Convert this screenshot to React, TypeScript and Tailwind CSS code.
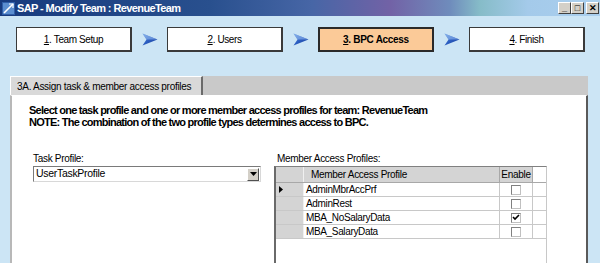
import { Fragment } from 'react'

const STEPS = [
  { num: '1', label: 'Team Setup', active: false },
  { num: '2', label: 'Users', active: false },
  { num: '3', label: 'BPC Access', active: true },
  { num: '4', label: 'Finish', active: false },
]

const PROFILES = [
  { name: 'AdminMbrAccPrf', enabled: false, current: true },
  { name: 'AdminRest', enabled: false, current: false },
  { name: 'MBA_NoSalaryData', enabled: true, current: false },
  { name: 'MBA_SalaryData', enabled: false, current: false },
]

function StepArrow() {
  return (
    <svg width="16" height="13" viewBox="0 0 16 13">
      <defs>
        <linearGradient id="arw" x1="0" y1="0" x2="1" y2="1">
          <stop offset="0" stopColor="#6fa0e0" />
          <stop offset="0.5" stopColor="#2a5cc0" />
          <stop offset="1" stopColor="#1a3f98" />
        </linearGradient>
      </defs>
      <path d="M0.5 0.5 L15.5 6.5 L0.5 12.5 L4.5 6.5 Z" fill="url(#arw)" />
      <path d="M0.5 0.5 L15.5 6.5 L4.5 6.5 Z" fill="#8fb8ee" opacity="0.6" />
    </svg>
  )
}

function WinButton({ glyph }: { glyph: string }) {
  return (
    <div className="flex h-[12px] w-[13px] items-center justify-center border border-t-white border-l-white border-r-[#404040] border-b-[#404040] bg-[#d4d0c8] text-[9px] leading-none font-bold text-black">
      {glyph}
    </div>
  )
}

function Checkbox({ checked }: { checked: boolean }) {
  return (
    <div className="flex h-[10px] w-[10px] items-center justify-center border border-t-[#808080] border-l-[#808080] border-r-[#c0c0c0] border-b-[#c0c0c0] bg-white">
      {checked && (
        <svg width="8" height="7" viewBox="0 0 8 7">
          <path d="M1 3 L3 5 L7 1" stroke="#000" strokeWidth="1.6" fill="none" />
        </svg>
      )}
    </div>
  )
}

export default function App() {
  return (
    <div className="flex h-[263px] w-[600px] flex-col overflow-hidden bg-[#cce5f5] font-['Liberation_Sans',Arial,sans-serif] text-black">
      {/* title bar */}
      <div className="flex h-[16px] items-center justify-between bg-[linear-gradient(90deg,#173a7e_0%,#29508e_35%,#4766a6_52%,#7262a6_65%,#6f8cbc_75%,#86bcc8_80%,#a4caea_88%,#aacfee_100%)] pr-[1px] pl-[2px]">
        <div className="flex items-center gap-[2px]">
          <svg width="13" height="13" viewBox="0 0 13 13">
            <rect x="0" y="0" width="13" height="13" fill="#2f5ea8" />
            <rect x="1" y="1" width="11" height="11" fill="#5b8ed0" />
            <path d="M2 11 L11 2" stroke="#fff" strokeWidth="1.6" />
            <path d="M7 2 L11 2 L11 6" stroke="#fff" strokeWidth="1.2" fill="none" />
          </svg>
          <span className="text-[11px] font-bold tracking-[-0.6px] text-white">SAP - Modify Team : RevenueTeam</span>
        </div>
        <div className="flex gap-0">
          <WinButton glyph="_" />
          <WinButton glyph="□" />
          <div className="ml-[2px]">
            <WinButton glyph="✕" />
          </div>
        </div>
      </div>

      {/* wizard steps */}
      <div className="mt-[11px] flex items-center pl-[16px]">
        {STEPS.map((s, i) => (
          <Fragment key={s.num}>
            {i > 0 && (
              <div className="flex w-[35px] justify-center">
                <StepArrow />
              </div>
            )}
            <div
              className={
                s.active
                  ? 'flex h-[25px] w-[116px] items-center justify-center border-2 border-[#2a2a2a] bg-[#fbca98] text-[10px] font-bold tracking-[-0.3px]'
                  : 'flex h-[25px] w-[116px] items-center justify-center border border-r-2 border-b-2 border-[#3a3a3a] bg-white text-[10px] tracking-[-0.4px]'
              }
            >
              <span className="underline">{s.num}</span>
              <span>.&nbsp;{s.label}</span>
            </div>
          </Fragment>
        ))}
      </div>

      <div className="mt-[12px] h-[2px] bg-[#3a3a3a]" />

      {/* tab control */}
      <div className="flex flex-1 flex-col pt-[12px] pr-[12px] pl-[10px]">
        <div className="flex h-[19px] bg-[#c9c9c9]">
          <div className="flex w-[193px] items-center border-t border-l border-r-2 border-t-white border-l-white border-r-[#6a6a6a] bg-[#d9d9d9] pl-[6px] text-[10px] tracking-[-0.3px]">
            3A. Assign task &amp; member access profiles
          </div>
        </div>
        <div className="flex-1 border-t border-l-2 border-r-2 border-t-white border-l-[#b8b8b8] border-r-[#5a5a5a] bg-white pt-[8px] pl-[17px]">
          <div className="text-[11px] leading-[12px] font-bold tracking-[-0.75px]">
            <div>Select one task profile and one or more member access profiles for team: RevenueTeam</div>
            <div>NOTE: The combination of the two profile types determines access to BPC.</div>
          </div>

          <div className="mt-[24px] flex">
            {/* task profile */}
            <div className="ml-[4px] flex w-[228px] flex-col">
              <div className="h-[13px] text-[10px] leading-[13px] tracking-[-0.3px]">Task Profile:</div>
              <div className="mt-[1px] flex h-[16px] items-center justify-between border border-t-[#7a7a7a] border-l-[#7a7a7a] border-r-[#d8d8d8] border-b-[#d8d8d8] bg-white">
                <span className="pl-[2px] text-[10.5px] tracking-[-0.3px]">UserTaskProfile</span>
                <div className="mr-[1px] flex h-[13px] w-[12px] items-center justify-center border border-t-white border-l-white border-r-[#505050] border-b-[#505050] bg-[#d4d0c8]">
                  <svg width="7" height="4" viewBox="0 0 7 4">
                    <path d="M0 0 L7 0 L3.5 4 Z" fill="#000" />
                  </svg>
                </div>
              </div>
            </div>

            {/* member access grid */}
            <div className="ml-[13px] flex w-[273px] flex-col">
              <div className="h-[13px] pl-[3px] text-[10px] leading-[13px] tracking-[-0.3px]">Member Access Profiles:</div>
              <div className="mt-[1px] h-[110px] border-t border-l-2 border-r border-t-[#808080] border-l-[#6a6a6a] border-r-[#c8c8c8] bg-white">
                <div className="flex h-[16px] border-b border-[#a8a8a8] text-[10px] tracking-[-0.3px]">
                  <div className="w-[28px] border-r border-[#f0f0f0] bg-[#d4d4d4]" />
                  <div className="flex w-[196px] items-center border-r border-[#a8a8a8] bg-[#d4d4d4] pl-[7px]">Member Access Profile</div>
                  <div className="flex w-[33px] items-center justify-center border-r border-[#a8a8a8] bg-[#d4d4d4]">Enable</div>
                </div>
                {PROFILES.map((p) => (
                  <div key={p.name} className="flex h-[14px] border-b border-[#c8c8c8] text-[10px] tracking-[-0.35px]">
                    <div className="flex w-[28px] items-center border-r border-[#f0f0f0] bg-[#d4d4d4] pl-[3px]">
                      {p.current && (
                        <svg width="4" height="7" viewBox="0 0 4 7">
                          <path d="M0 0 L4 3.5 L0 7 Z" fill="#000" />
                        </svg>
                      )}
                    </div>
                    <div className="flex w-[196px] items-center border-r border-[#c8c8c8] pl-[2px]">{p.name}</div>
                    <div className="flex w-[33px] items-center justify-center border-r border-[#c8c8c8]">
                      <Checkbox checked={p.enabled} />
                    </div>
                  </div>
                ))}
              </div>
            </div>
          </div>
        </div>
      </div>
    </div>
  )
}
